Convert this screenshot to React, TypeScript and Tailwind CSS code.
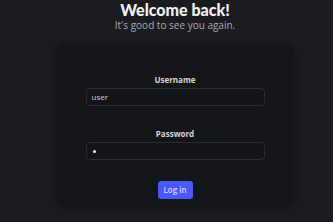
export default function App() {
  return (
    <div className="min-h-screen w-full bg-[#1b1c20] flex flex-col items-center pl-[17px] font-['Open_Sans',sans-serif]">
      <h1 className="mt-[1px] text-[16px] leading-[18px] font-black text-[#f1f1f3] font-['Lato',sans-serif]">
        Welcome back!
      </h1>
      <p className="text-[10px] leading-[12px] text-[#a9abb2]">It's good to see you again.</p>

      <div className="mt-[13px] w-[236px] rounded-[7px] bg-[#141519] shadow-[0_2px_10px_rgba(0,0,0,0.45)] flex flex-col items-center pt-[31px] pb-[6px]">
        <label className="text-[8px] leading-[10px] font-bold text-[#d4d5da]">Username</label>
        <div className="mt-[3px] w-[179px] h-[18px] rounded-[4px] border border-[#2a2c33] bg-[#131418] flex items-center px-[5px]">
          <span className="text-[8px] text-[#d0d1d6]">user</span>
        </div>

        <label className="mt-[23px] text-[8px] leading-[10px] font-bold text-[#d4d5da]">Password</label>
        <div className="mt-[3px] w-[179px] h-[18px] rounded-[4px] border border-[#2a2c33] bg-[#131418] flex items-center px-[6px]">
          <span className="w-[3px] h-[3px] rounded-full bg-[#f2f2f2]" />
        </div>

        <button className="mt-[21px] w-[35px] h-[18px] rounded-[3px] bg-[#4a58fb] text-[8px] font-semibold text-[#d3d7ff]">
          Log in
        </button>
      </div>
    </div>
  );
}
